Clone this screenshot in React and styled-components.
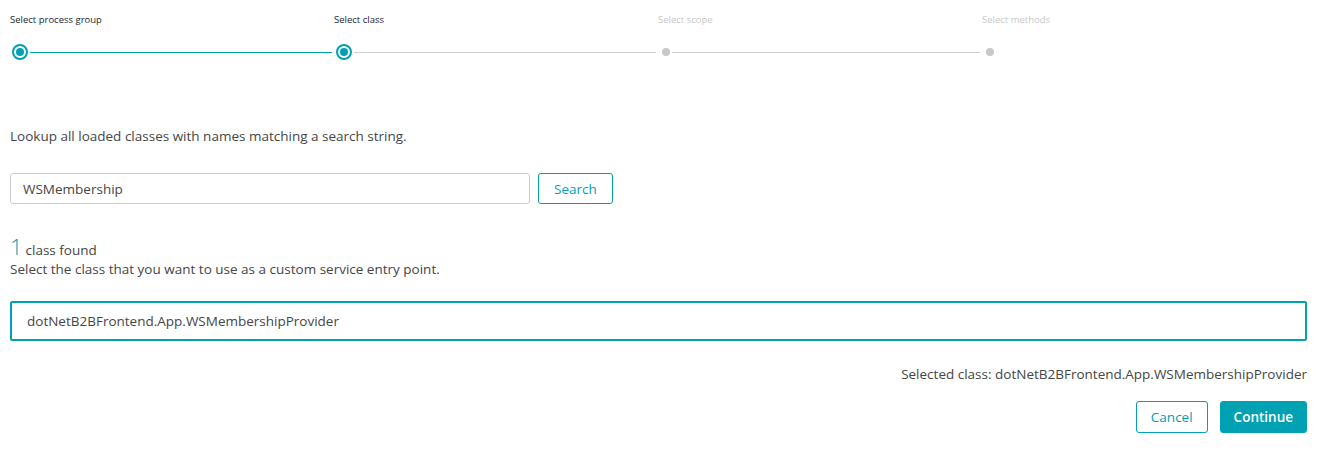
import React from 'react'
import styled, { createGlobalStyle } from 'styled-components'

const teal = '#00a1b2'
const text = '#454646'

const GlobalStyle = createGlobalStyle`
  body {
    margin: 0;
    background: #fff;
    font-family: "Open Sans", "Noto Sans", sans-serif;
    color: ${text};
  }
`

const Page = styled.div`
  padding: 13px 19px 0 10px;
  width: 1326px;
  box-sizing: border-box;
`

const Stepper = styled.div`
  display: grid;
  grid-template-columns: repeat(4, 324px);
`

const Step = styled.div`
  display: flex;
  flex-direction: column;
`

const StepLabel = styled.div`
  font-size: 9.5px;
  height: 14px;
  line-height: 14px;
  color: ${p => (p.active ? '#1d1d33' : '#c8c8c8')};
`

const Track = styled.div`
  display: flex;
  align-items: center;
  height: 18px;
  margin-top: 16px;
`

const Ring = styled.div`
  width: 16px;
  height: 16px;
  margin-left: 2px;
  box-sizing: border-box;
  border: 2px solid ${teal};
  border-radius: 50%;
  display: flex;
  align-items: center;
  justify-content: center;
  flex: none;
  &::after {
    content: '';
    width: 8px;
    height: 8px;
    border-radius: 50%;
    background: ${teal};
  }
`

const Dot = styled.div`
  width: 8px;
  height: 8px;
  border-radius: 50%;
  background: #c8c8c8;
  flex: none;
  margin-left: 4px;
`

const Line = styled.div`
  height: 1px;
  flex: 1;
  margin: 0 2px 0 2px;
  background: ${p => (p.done ? teal : '#cfcfcf')};
`

const Intro = styled.p`
  margin: 66px 0 0;
  font-size: 13.5px;
  line-height: 18px;
`

const SearchRow = styled.div`
  display: flex;
  gap: 8px;
  margin-top: 28px;
`

const SearchInput = styled.div`
  width: 520px;
  height: 31px;
  box-sizing: border-box;
  border: 1px solid #cdcdcd;
  border-radius: 3px;
  padding: 0 12px;
  display: flex;
  align-items: center;
  font-size: 13.5px;
`

const Button = styled.button`
  height: ${p => (p.tall ? 32 : 31)}px;
  padding: 0 ${p => p.pad}px;
  border-radius: 3px;
  border: 1px solid ${teal};
  background: ${p => (p.primary ? teal : '#fff')};
  color: ${p => (p.primary ? '#fff' : teal)};
  font-family: inherit;
  font-size: 13.5px;
  font-weight: ${p => (p.primary ? 600 : 400)};
  cursor: pointer;
`

const Found = styled.div`
  margin-top: 31px;
  display: flex;
  align-items: baseline;
  gap: 3px;
  font-size: 13.5px;
`

const Count = styled.span`
  font-size: 22px;
  font-weight: 300;
  color: ${teal};
  line-height: 22px;
`

const Hint = styled.div`
  font-size: 13.5px;
  line-height: 18px;
  margin-top: 1px;
`

const ClassBox = styled.div`
  margin-top: 23px;
  height: 40px;
  box-sizing: border-box;
  border: 2px solid ${teal};
  border-radius: 2px;
  padding: 0 15px;
  display: flex;
  align-items: center;
  font-size: 13.5px;
`

const Selected = styled.div`
  margin-top: 24px;
  text-align: right;
  font-size: 13.5px;
`

const Actions = styled.div`
  display: flex;
  justify-content: flex-end;
  gap: 12px;
  margin-top: 18px;
`

const steps = [
  { label: 'Select process group', state: 'done' },
  { label: 'Select class', state: 'current' },
  { label: 'Select scope', state: 'todo' },
  { label: 'Select methods', state: 'todo' },
]

export default function App() {
  return (
    <Page>
      <GlobalStyle />
      <Stepper>
        {steps.map((s, i) => (
          <Step key={s.label}>
            <StepLabel active={s.state !== 'todo'}>{s.label}</StepLabel>
            <Track>
              {s.state === 'todo' ? <Dot /> : <Ring />}
              {i < steps.length - 1 && <Line done={s.state === 'done'} />}
            </Track>
          </Step>
        ))}
      </Stepper>

      <Intro>Lookup all loaded classes with names matching a search string.</Intro>

      <SearchRow>
        <SearchInput>WSMembership</SearchInput>
        <Button pad={15}>Search</Button>
      </SearchRow>

      <Found>
        <Count>1</Count>
        <span>class found</span>
      </Found>
      <Hint>Select the class that you want to use as a custom service entry point.</Hint>

      <ClassBox>dotNetB2BFrontend.App.WSMembershipProvider</ClassBox>

      <Selected>Selected class: dotNetB2BFrontend.App.WSMembershipProvider</Selected>

      <Actions>
        <Button tall pad={14}>Cancel</Button>
        <Button tall pad={13} primary>Continue</Button>
      </Actions>
    </Page>
  )
}
